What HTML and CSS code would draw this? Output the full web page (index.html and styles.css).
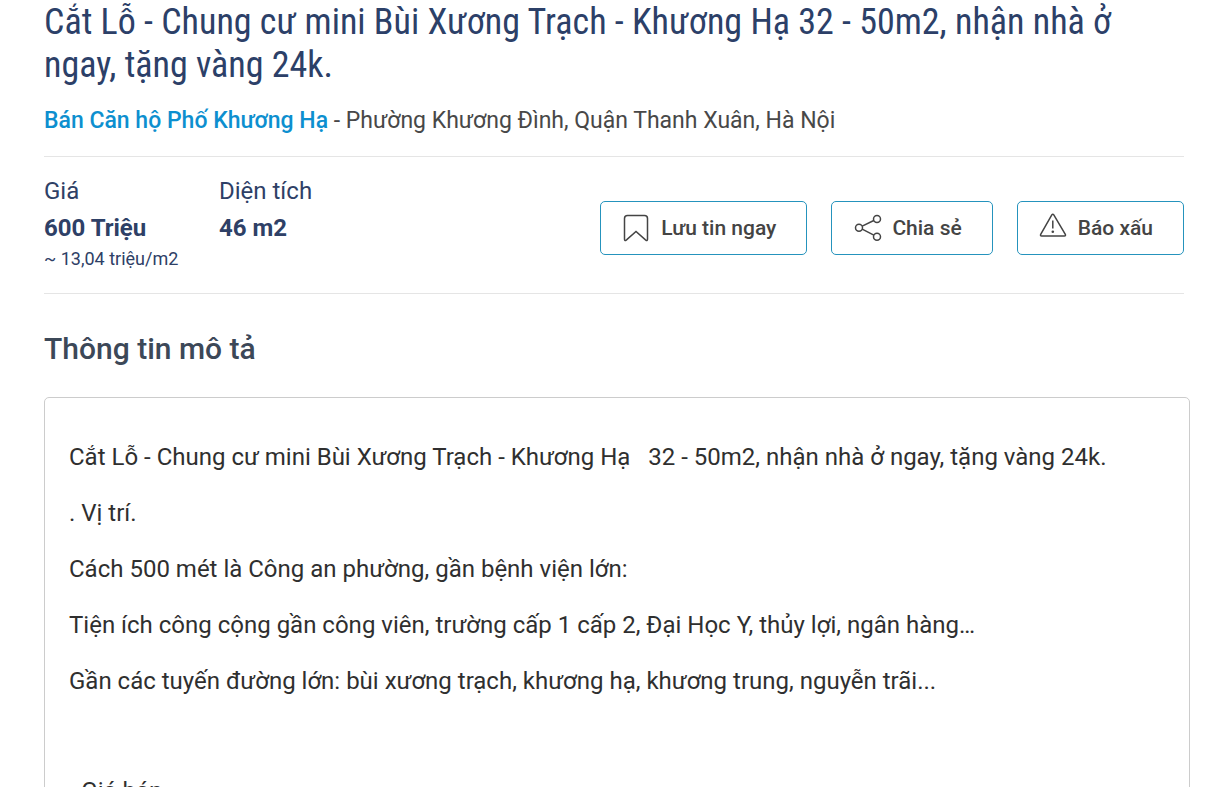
FILE: index.html
```html
<!DOCTYPE html>
<html lang="vi">
<head>
<meta charset="utf-8">
<meta name="viewport" content="width=device-width, initial-scale=1">
<title>Chung cư mini Bùi Xương Trạch</title>
<link rel="stylesheet" href="styles.css">
</head>
<body>
<main class="listing">
  <header class="listing-head">
    <h1 class="title">Cắt Lỗ - Chung cư mini Bùi Xương Trạch - Khương Hạ 32 - 50m2, nhận nhà ở ngay, tặng vàng 24k.</h1>
    <p class="address"><a class="address-link" href="#">Bán Căn hộ Phố Khương Hạ</a> - Phường Khương Đình, Quận Thanh Xuân, Hà Nội</p>
  </header>
  <section class="summary">
    <dl class="facts">
      <div class="fact">
        <dt class="fact-label">Giá</dt>
        <dd class="fact-value">600 Triệu</dd>
        <dd class="fact-note">~ 13,04 triệu/m2</dd>
      </div>
      <div class="fact">
        <dt class="fact-label">Diện tích</dt>
        <dd class="fact-value">46 m2</dd>
      </div>
    </dl>
    <div class="actions">
      <button class="action" type="button">
        <svg class="icon" viewBox="0 0 28 28" aria-hidden="true"><path d="M4.500 1.500h17q3 0 3 3V25.200q0 2.200-2 .600L13 17.500 3.500 25.800q-2 1.600-2-.600V4.500q0-3 3-3z"/></svg>
        Lưu tin ngay
      </button>
      <button class="action" type="button">
        <svg class="icon" viewBox="0 0 28 28" aria-hidden="true"><circle cx="5" cy="13.700" r="3.500"/><circle cx="23" cy="5" r="3.500"/><circle cx="23" cy="22.700" r="3.500"/><path d="M8.200 12.200L19.800 6.500M8.200 15.200l11.600 6"/></svg>
        Chia sẻ
      </button>
      <button class="action" type="button">
        <svg class="icon" viewBox="0 0 28 28" aria-hidden="true"><path d="M11.800.900q1-1.500 2 0L25.300 20.300q.700 1.700-1 1.700H1.700q-1.700 0-1-1.700z"/><path d="M12.800 6.500v8"/><circle class="icon-dot" cx="12.800" cy="17.700" r="1.300"/></svg>
        Báo xấu
      </button>
    </div>
  </section>
  <section class="description">
    <h2 class="section-title">Thông tin mô tả</h2>
    <div class="description-box">
      <p class="line">Cắt Lỗ - Chung cư mini Bùi Xương Trạch - Khương Hạ &nbsp; 32 - 50m2, nhận nhà ở ngay, tặng vàng 24k.</p>
      <p class="line">. Vị trí.</p>
      <p class="line">Cách 500 mét là Công an phường, gần bệnh viện lớn:</p>
      <p class="line">Tiện ích công cộng gần công viên, trường cấp 1 cấp 2, Đại Học Y, thủy lợi, ngân hàng…</p>
      <p class="line">Gần các tuyến đường lớn: bùi xương trạch, khương hạ, khương trung, nguyễn trãi...</p>
      <p class="line line-group">. Giá bán</p>
    </div>
  </section>
</main>
</body>
</html>
```
FILE: styles.css
```css
* { box-sizing: border-box; }
html { overflow: hidden; }
body {
  margin: 0;
  background: #fff;
  color: #2f2f2f;
  font-family: Roboto, "Liberation Sans", sans-serif;
  font-size: 24px;
}
h1, h2, p, dl, dd { margin: 0; }
.listing { padding: 1px 22px 0 44px; }
.title {
  color: #2c4068;
  font-family: "Roboto Condensed", Roboto, sans-serif;
  font-size: 36px;
  font-weight: 400;
  line-height: 43px;
}
.address {
  padding: 16px 0 17px;
  color: #484848;
  font-size: 23px;
  line-height: 36px;
}
.address-link { color: #0d8fcf; font-weight: 500; text-decoration: none; }
.summary {
  display: flex;
  justify-content: space-between;
  align-items: flex-start;
  padding: 16px 0 22px;
  border: solid #e5e5e5;
  border-width: 1px 0;
}
.facts { display: flex; color: #2e4066; }
.fact { min-width: 175px; }
.fact-label { line-height: 36px; }
.fact-value { font-weight: 700; line-height: 38px; }
.fact-note { font-size: 18px; line-height: 24px; }
.actions { display: flex; gap: 24px; padding-top: 28px; }
.action {
  display: flex;
  align-items: center;
  gap: 10px;
  height: 54px;
  padding: 0 30px 0 22px;
  border: 1px solid #2593bd;
  border-radius: 5px;
  background: #fff;
  color: #444;
  font: 500 21px Roboto, sans-serif;
}
.icon { width: 28px; height: 28px; overflow: visible; fill: none; stroke: #444; stroke-width: 1.5; }
.icon-dot { fill: #444; stroke: none; }
.section-title { padding: 36px 0 29px; color: #3c4858; font-size: 30px; font-weight: 500; line-height: 38px; }
.description-box { margin-right: -6px; padding: 41px 24px; border: 1px solid #ccc; border-radius: 5px; }
.line { margin-bottom: 20px; line-height: 36px; }
.line-group { margin-top: 74px; }
```
